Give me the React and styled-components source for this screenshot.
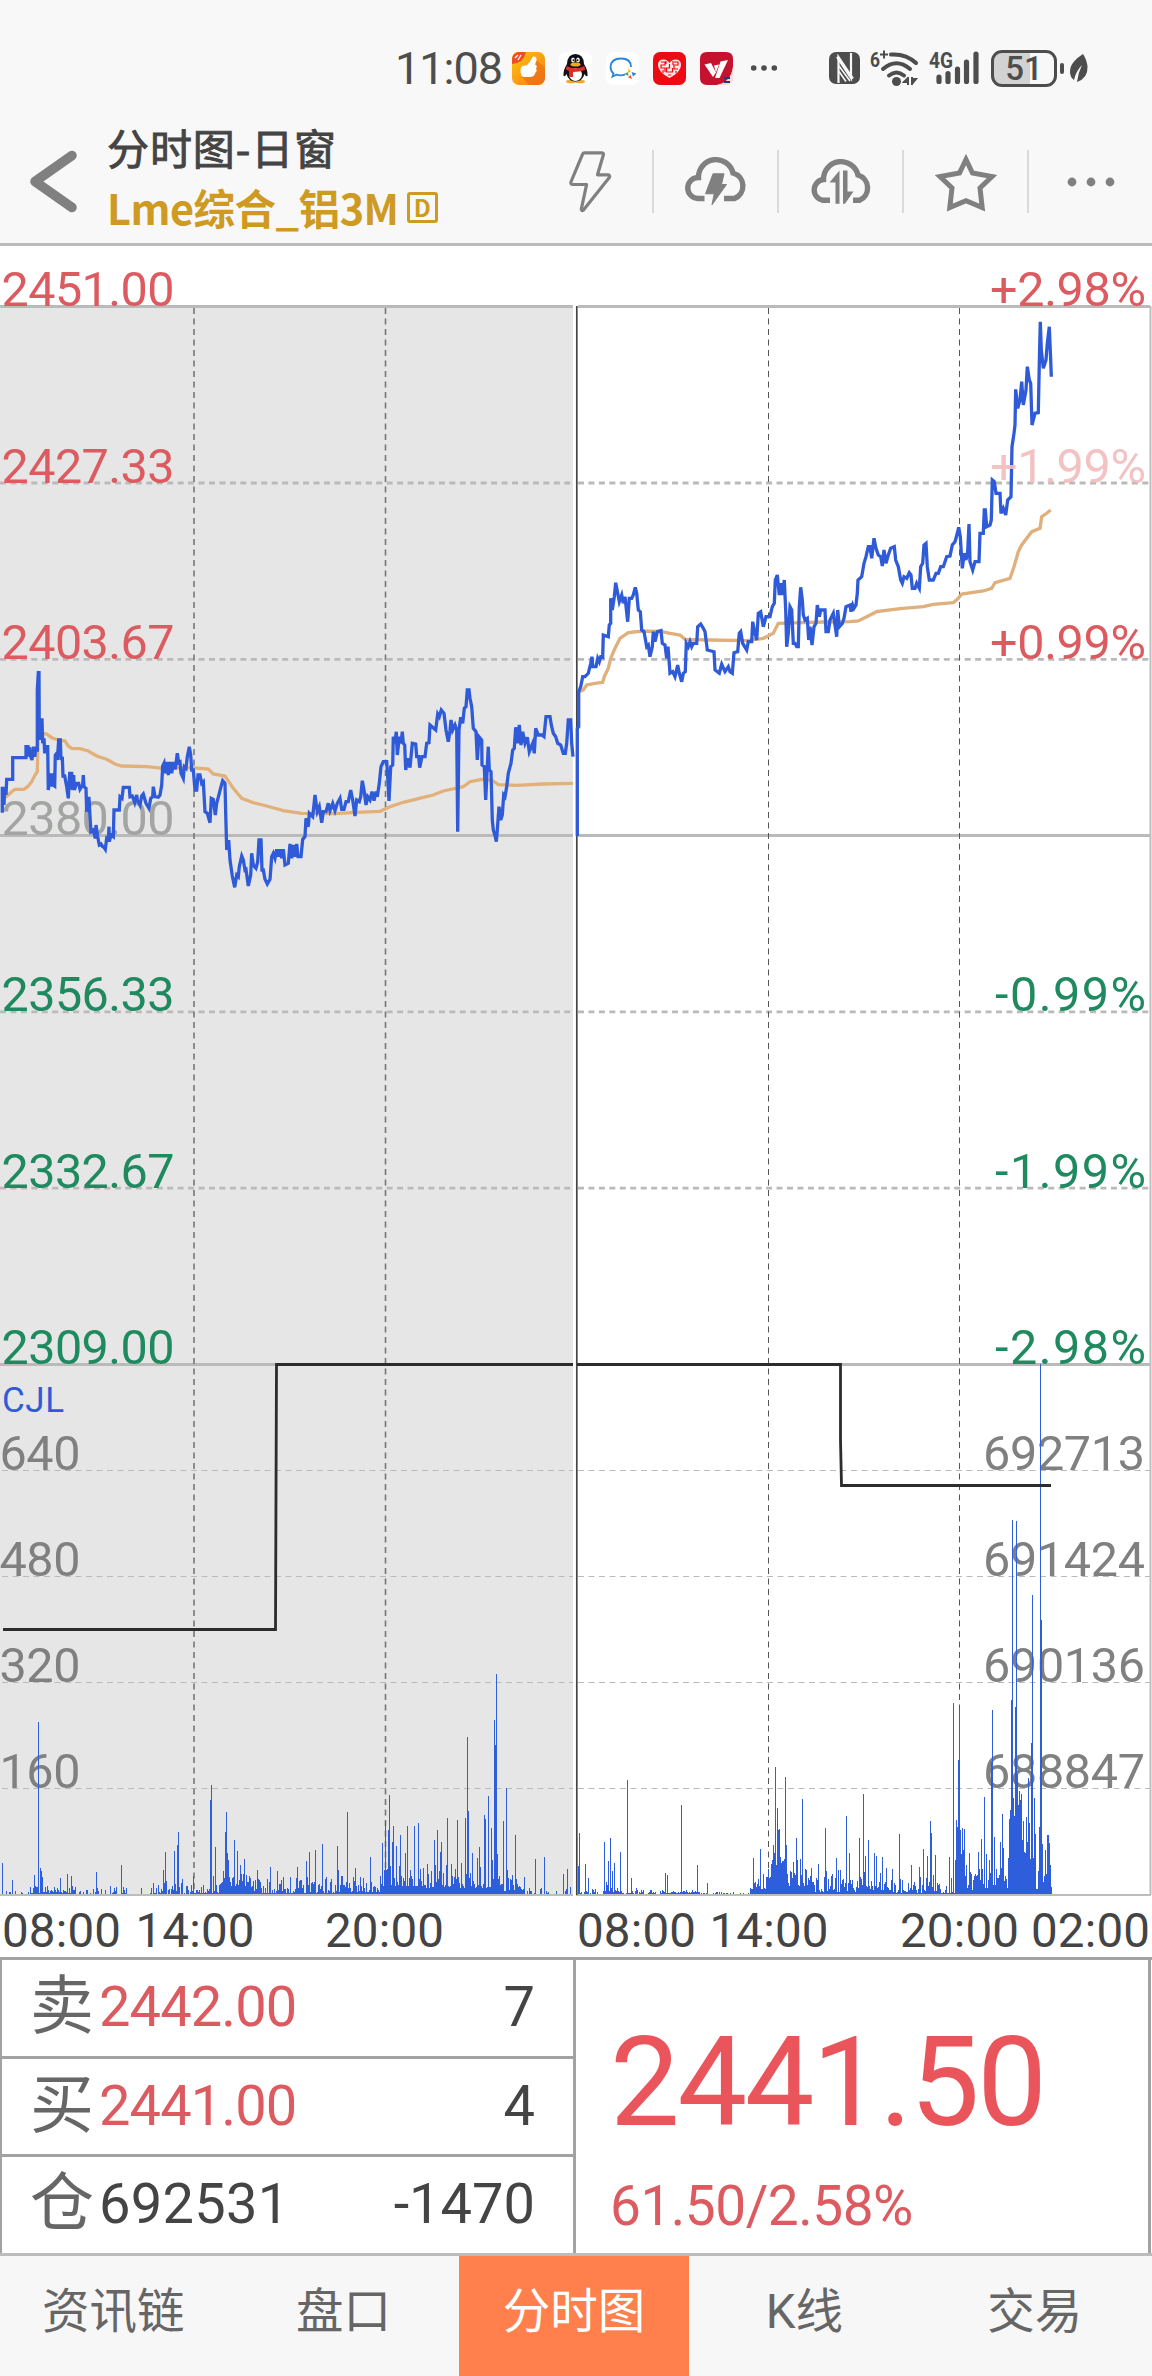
import styled, { createGlobalStyle } from "styled-components";

const GlobalStyle = createGlobalStyle`
  * {
    box-sizing: border-box;
  }

  body {
    margin: 0;
    background-color: #fff;
    font-family: Roboto, "Noto Sans CJK SC", sans-serif;
    color: #444;
  }
`;

// price traces: every segment has its own origin, points are in thirds of a pixel
const PRICE_PREV = [
  {
    x: 0,
    y: 640,
    raw: "7,518 7,445 12,445 12,495 14,440 18,465 20,418 38,418 38,353 78,353 78,320 84,320 86,350 88,322 92,350 96,360 100,320 104,350 108,320 112,335 112,150 115,98 117,98 118,300 121,240 126,240 128,310 132,295 134,340 138,320 143,320 145,450 150,400 153,440 157,400 160,435 164,438 166,345 170,340 172,360 176,300 181,300 183,360 187,350 189,408 194,408 200,440 205,475 209,400 215,400 217,450 221,405 223,450 230,430 236,430 240,448 248,435 250,405 252,440 258,445 260,515 265,475 267,475 271,545 273,575 280,570 286,595 288,555 293,590 298,615 303,612 308,620 312,622 316,628 320,595 325,598 327,560 328,605 333,585 340,590 342,510 358,510 360,470 366,475 370,442 388,442 390,470 397,468 404,488 410,465 412,480 420,495 425,468 430,462 438,490 447,505 452,475 458,470 460,440 465,470 475,472 480,465 485,435 488,378 492,370 495,400 500,366 505,405 510,366 515,400 520,366 526,388 532,340 536,368 540,366 543,400 550,415 553,380 558,385 562,350 568,320 572,345 575,390 580,390 585,450 590,450 594,405 600,405 605,430 610,425 615,515 622,520 630,548 634,475 640,478 646,525 650,490 658,460 663,440 668,422 675,430 677,520 680,630 686,600 690,660 697,708 704,742 710,705 715,710 718,680 725,648 730,660 735,690 738,688 745,738 752,705 755,640 760,675 768,685 773,665 777,600 783,600 786,690 790,690 795,718 802,732 810,718 815,650 820,640 825,655 830,628 835,650 840,628 845,655 850,628 855,675 865,670"
  },
  {
    x: 290,
    y: 640,
    raw: "0,612 5,655 10,615 16,650 20,612 24,650 33,650 38,598 45,590 48,535 55,560 58,520 68,530 75,465 82,515 88,500 95,548 100,515 108,515 115,490 120,512 128,490 135,512 142,490 150,475 155,508 162,508 168,485 175,485 182,450 188,480 195,528 200,480 208,485 212,470 217,422 222,450 228,495 233,470 240,480 246,455 252,482 258,455 262,470 268,430 273,380 280,365 290,365 293,410 297,483 302,380 308,375 310,290 314,310 319,275 322,345 328,290 333,310 337,275 340,310 344,315 347,390 353,355 360,383 367,310 377,312 380,350 386,350 389,383 396,350 405,350 410,310 417,308 420,255 437,270 443,222 448,230 454,210 462,220 468,270 475,305 480,272 483,240 488,270 495,255 500,270 503,575 507,270 512,232 518,250 523,205 528,200 532,150 537,150 540,175 545,200 550,265 558,275 562,360 567,290 575,300 576,375 583,380 587,480 592,380 595,320 598,390 603,395 607,540 610,570 616,590 619,605 622,570 627,500 632,540 637,525 641,465 645,470 650,440 655,400 663,370 668,330 673,325 677,262 683,310 688,255 693,315 698,275 705,310 712,292 718,335 728,310 733,340 737,265 745,285 755,285 762,290 768,230 780,230 784,255 790,280 797,290 803,310 812,315 820,340 826,340 830,310 835,240 842,240 845,310 849,350"
  }
];

const PRICE_TODAY = [
  {
    x: 570,
    y: 500,
    raw: "22,1008 22,685 26,680 26,575 32,560 38,530 45,530 55,520 62,490 66,470 68,500 78,500 83,475 88,485 92,470 98,472 100,405 115,410 118,375 122,370 122,295 127,330 133,290 137,248 143,280 148,305 155,285 160,310 165,290 173,365 178,295 185,295 190,285 196,262 200,280 205,330 211,335 215,390 222,395 230,440 235,435 240,470 247,440 250,395 255,425 262,395 273,392 277,430 285,435 290,475 294,440 300,520 308,515 315,530 323,495 328,520 335,545 340,520 346,515 349,430 355,440 360,425 365,440 370,430 380,430 383,380 392,372 400,385 405,395 412,450 432,455 435,510 448,520 455,493 465,515 475,500 480,515 487,520 492,458 503,455 508,400 512,395 518,430 530,450 535,425 545,425 548,365 553,390 560,420 565,340 572,335 580,380 588,350 600,350 607,320 613,310 616,240 622,225 628,285 633,250 637,285 643,240 647,330 650,440 655,400 660,320 665,330 670,430 675,430 680,440 685,440 688,320 692,262 697,300 700,345 705,360 712,355 716,420 720,380 726,435 732,380 738,370 742,315 748,350 752,330 765,330 768,395 775,395 780,360 790,340 795,375 800,410 803,330 808,380 817,370 822,355 828,320"
  },
  {
    x: 850,
    y: 300,
    raw: "0,915 3,935 8,915 12,925 18,915 22,880 24,840 30,835 35,830 42,790 48,770 55,740 60,740 65,775 72,715 78,745 85,765 92,770 97,798 102,750 108,790 115,765 122,745 133,740 137,780 145,800 152,840 157,850 162,830 170,835 178,818 183,825 187,865 195,865 200,850 208,865 212,800 218,790 222,735 228,730 232,800 238,840 250,840 258,820 265,820 272,800 280,800 290,770 300,768 307,735 315,725 322,700 326,682 331,710 337,805 343,760 348,780 353,755 357,672 360,785 368,810 375,785 387,785 390,700 400,700 403,630 406,630 410,680 420,675 424,660 427,540 433,545 438,580 450,580 453,640 460,625 467,645 473,600 483,590 486,440 492,400 495,375 497,268 503,325 510,300 515,245 520,315 528,270 532,200 538,240 542,250 546,375 555,340 565,338 568,190 571,65 574,150 580,205 588,180 592,130 598,80 602,180 604,230"
  }
];

const AVG_PREV = [
  {
    x: 0,
    y: 640,
    raw: "12,475 25,465 35,455 45,448 72,448 85,438 95,425 105,405 112,395 114,300 125,280 140,282 155,293 175,300 195,303 205,318 215,325 240,326 265,333 290,348 320,358 345,372 365,378 440,380 490,385 575,383 625,387 640,402 675,408 700,445 725,475 760,488 800,498 850,512"
  },
  {
    x: 290,
    y: 640,
    raw: "0,515 35,520 130,521 200,517 270,514 300,500 340,487 400,472 430,465 460,453 520,440 540,425 575,418 605,420 625,434 680,436 760,432 849,430"
  }
];

const AVG_TODAY = [
  {
    x: 570,
    y: 500,
    raw: "28,575 40,570 50,555 75,550 98,547 103,530 115,505 122,475 135,445 150,415 175,398 220,393 275,395 300,400 330,405 345,418 420,420 530,422 580,415 610,400 625,370 700,368 760,366 840,365"
  },
  {
    x: 850,
    y: 300,
    raw: "0,965 25,963 50,950 80,935 150,926 220,920 250,913 310,908 325,895 335,882 400,873 425,865 435,848 480,835 492,800 505,755 515,735 545,695 570,685 575,650 590,640 602,630"
  }
];

// x, height
const VOLUME_PEAKS = [
  [2, 31], [12, 14], [34, 19], [38, 172], [40, 26], [41, 23], [42, 17], [60, 16], [67, 20], [71, 18], [96, 22], [121, 29],
  [141, 6], [153, 11], [163, 24], [165, 42], [174, 43], [177, 49], [178, 62], [182, 15], [193, 18], [210, 94], [211, 109],
  [213, 18], [215, 47], [225, 62], [226, 82], [227, 41], [228, 34], [234, 54], [237, 43], [240, 29], [244, 35], [246, 19],
  [257, 24], [270, 27], [277, 23], [283, 17], [290, 17], [297, 27], [306, 33], [309, 42], [315, 44], [322, 50], [337, 48],
  [338, 24], [347, 82], [355, 26], [370, 37], [382, 51], [385, 73], [388, 64], [389, 99], [392, 52], [393, 68], [396, 48],
  [400, 59], [405, 41], [407, 68], [414, 68], [418, 71], [420, 25], [434, 54], [437, 64], [440, 42], [441, 52], [447, 76],
  [451, 30], [457, 74], [461, 31], [465, 76], [467, 157], [468, 83], [472, 41], [477, 36], [479, 47], [484, 79], [485, 75],
  [488, 98], [491, 66], [492, 34], [494, 174], [495, 149], [496, 220], [497, 40], [503, 73], [506, 106], [507, 24],
  [512, 19], [515, 59], [535, 35], [544, 37], [563, 20], [567, 25],
  [578, 28], [579, 61], [585, 30], [588, 16], [604, 52], [608, 33], [610, 56], [612, 23], [614, 31], [620, 42], [627, 114],
  [631, 16], [665, 21], [667, 19], [681, 89], [697, 29], [707, 11], [753, 36], [760, 45], [763, 20], [768, 25], [773, 49],
  [774, 41], [775, 127], [777, 86], [778, 64], [779, 65], [785, 117], [786, 49], [793, 32], [796, 56], [797, 34], [800, 35],
  [802, 95], [806, 24], [811, 26], [818, 30], [825, 66], [832, 20], [836, 36], [846, 78], [849, 41], [859, 56], [863, 100],
  [865, 38], [868, 54], [874, 41], [876, 38], [882, 37], [886, 26], [892, 25], [899, 60], [911, 29], [919, 27], [923, 45],
  [927, 38], [930, 73], [931, 61], [935, 39], [949, 37], [953, 191], [956, 74], [957, 67], [958, 134], [959, 184],
  [960, 64], [962, 66], [964, 65], [969, 41], [978, 42], [981, 55], [984, 97], [986, 40], [991, 132], [992, 184],
  [994, 57], [1000, 52], [1002, 80], [1003, 46], [1009, 75], [1011, 194], [1012, 374], [1013, 96], [1014, 78], [1015, 187],
  [1016, 373], [1017, 120], [1018, 89], [1019, 103], [1020, 94], [1021, 100], [1022, 54], [1026, 77], [1028, 116],
  [1029, 71], [1031, 151], [1032, 299], [1034, 96], [1035, 60], [1039, 67], [1040, 530], [1041, 274], [1042, 50],
  [1045, 44], [1047, 59], [1048, 59], [1049, 51], [1050, 29], [1051, 7]
];

// from, to, floor, spread
const VOLUME_BASE = [
  [3, 30, -3, 6], [30, 50, 1, 9], [50, 75, 1, 9], [75, 128, -2, 10], [128, 150, -5, 6], [150, 195, 0, 13],
  [195, 219, 1, 8], [219, 250, 8, 16], [250, 305, 1, 15], [305, 345, 1, 18], [345, 380, 2, 15], [380, 425, 8, 22],
  [425, 500, 6, 24], [500, 525, 3, 14], [525, 572, -3, 11], [578, 605, -1, 7], [605, 622, 2, 12], [622, 665, 0, 6],
  [665, 700, 1, 4], [700, 750, -1, 3], [750, 768, 5, 14], [768, 785, 14, 26], [785, 815, 8, 22], [815, 870, 2, 24],
  [870, 890, 3, 18], [890, 918, 1, 14], [918, 955, 1, 20], [955, 965, 30, 30], [965, 985, 3, 26], [985, 1010, 6, 30],
  [1010, 1026, 40, 45], [1026, 1036, 35, 30], [1036, 1038, 5, 15], [1038, 1051, 12, 26]
];

const PRICE_ROWS = [
  { y: 306.5, price: "2451.00", change: "+2.98%", color: "#dc5b60", solid: true },
  { y: 483, price: "2427.33", change: "+1.99%", color: "#dc5b60" },
  { y: 659.3, price: "2403.67", change: "+0.99%", color: "#dc5b60" },
  { y: 835.5, price: "2380.00", color: "#a3a5a3", solid: true },
  { y: 1011.8, price: "2356.33", change: "-0.99%", color: "#1f8a5f" },
  { y: 1188.2, price: "2332.67", change: "-1.99%", color: "#1f8a5f" },
  { y: 1364.5, price: "2309.00", change: "-2.98%", color: "#1f8a5f", solid: true }
];

const VOLUME_ROWS = [
  { y: 1470.5, volume: "640", interest: "692713" },
  { y: 1576.5, volume: "480", interest: "691424" },
  { y: 1682.5, volume: "320", interest: "690136" },
  { y: 1788.5, volume: "160", interest: "688847" }
];

const TIMES = [
  [2, "08:00"],
  [135.5, "14:00"],
  [325, "20:00"],
  [577, "08:00"],
  [709.5, "14:00"],
  [900, "20:00"],
  [1031, "02:00"]
];

const QUOTES = [
  { label: "卖", value: "2442.00", amount: "7", up: true },
  { label: "买", value: "2441.00", amount: "4", up: true },
  { label: "仓", value: "692531", amount: "-1470" }
];

const TABS = ["资讯链", "盘口", "分时图", "K线", "交易"];

const toPoints = (segments) =>
  segments
    .map(({ x, y, raw }) =>
      raw
        .split(" ")
        .map((pair) => {
          const [px, py] = pair.split(",").map(Number);
          return `${(x + px / 3).toFixed(1)},${(y + py / 3).toFixed(1)}`;
        })
        .join(" ")
    )
    .join(" ");

const volumePath = () => {
  const heights = {};
  let seed = 7;
  VOLUME_BASE.forEach(([from, to, floor, spread]) => {
    for (let x = from; x < to; x++) {
      seed = (seed * 1103515245 + 12345) % 2147483648;
      const r = seed / 2147483648;
      heights[x] = Math.round(floor + spread * r * r);
    }
  });
  VOLUME_PEAKS.forEach(([x, h]) => {
    heights[x] = h;
  });
  return Object.entries(heights)
    .filter(([, h]) => h > 0)
    .map(([x, h]) => `M${x} 1894v${-h}h1v${h}z`)
    .join("");
};

const NfcIcon = () => (
  <svg width="31" height="32" viewBox="0 0 31 32">
    <rect width="31" height="32" rx="7" fill="#4d4d4d" />
    <path d="M9.500 31V5L24 26.500" fill="none" stroke="#f8f8f8" strokeWidth="2.200" />
    <path d="M22 1v25L8 5" fill="none" stroke="#f8f8f8" strokeWidth="2.200" />
    <path d="M10 14l11 15M10 19.500l7 10" stroke="#f8f8f8" strokeWidth="1.600" />
  </svg>
);

const WifiIcon = () => (
  <svg width="49" height="37" viewBox="0 0 49 37">
    <text x="0" y="17" fontSize="21" fontWeight="700" fill="#4d4d4d" textLength="10" lengthAdjust="spacingAndGlyphs">6</text>
    <path d="M10 4.500h8M14 .5v8" stroke="#4d4d4d" strokeWidth="2" />
    <g fill="none" stroke="#4d4d4d" strokeWidth="4" strokeLinecap="round">
      <path d="M21 4.500q15-1 25 8.500" />
      <path d="M13 19q13.500-11.500 27 0" />
      <path d="M19 25.500q7.500-6 15 0" />
    </g>
    <circle cx="26.500" cy="31.500" r="4.500" fill="#4d4d4d" />
    <path d="M38 27v8M38 28l-4 4h4M42 27v8M42 34l4-5h-4" stroke="#4d4d4d" strokeWidth="2" fill="#4d4d4d" />
  </svg>
);

const SignalIcon = () => (
  <svg width="50" height="36" viewBox="0 0 50 36">
    <text x="0" y="17.500" fontSize="22" fontWeight="700" fill="#4d4d4d" textLength="24" lengthAdjust="spacingAndGlyphs">4G</text>
    <g stroke="#4d4d4d" strokeWidth="5.200" strokeLinecap="round">
      <path d="M10 27v4.500M19 23.500v8M28.500 19v12.500M37.500 12v19.500M47 4v27.500" />
    </g>
  </svg>
);

const LeafIcon = () => (
  <svg width="18" height="28" viewBox="0 0 18 28">
    <path d="M13 0C4 6 0 11 0 18q0 5 4 8Q6 17 12 11 8 19 7 28 18 24 17.500 13 17 6 13 0z" fill="#4d4d4d" />
  </svg>
);

const ThumbApp = () => (
  <svg width="33" height="33" viewBox="0 0 33 33">
    <defs>
      <linearGradient id="thumb" x1="0" y1="0" x2="1" y2="1">
        <stop offset="0" stopColor="#ffc60a" />
        <stop offset="1" stopColor="#f47a20" />
      </linearGradient>
      <clipPath id="thumbClip">
        <rect width="33" height="33" rx="7" />
      </clipPath>
    </defs>
    <g clipPath="url(#thumbClip)">
      <rect width="33" height="33" fill="url(#thumb)" />
      <path d="M24 7l9 9v17H17l-7-8z" fill="#ea6a12" opacity=".6" />
      <path d="M0 0h14q-2 11-14 12z" fill="#ef4e24" />
      <path d="M3 6l3-3M6 8l3-5" stroke="#fff" strokeWidth="1.200" />
      <path d="M21 4.500q4-.5 3.500 4L23 12.500q3 1.500 1 4 1.500 2.500-.5 4-1 4-5 4.500h-7q-3-1-3-6 0-4 2-5l4.500-1q3-2.500 6-8.500z" fill="#fff" />
    </g>
  </svg>
);

const PenguinApp = () => (
  <svg width="33" height="33" viewBox="0 0 33 33">
    <rect width="33" height="33" rx="7" fill="#fff" />
    <ellipse cx="12" cy="29.500" rx="5" ry="1.800" fill="#f5a623" />
    <ellipse cx="21" cy="29.500" rx="5" ry="1.800" fill="#f5a623" />
    <path d="M16.500 2q8 0 8.500 10 4 6 3.500 12-1.500 1-3-2-2 7.500-9 7.500T7.500 22q-1.500 3-3 2-.5-6 3.500-12 .5-10 8.500-10z" fill="#111" />
    <ellipse cx="16.500" cy="22.500" rx="6.500" ry="6.500" fill="#fff" />
    <path d="M7.500 14q9 4.500 18 0l.5 4q-5 2-12 2v5h-4v-6l-3-1.500z" fill="#e22b2b" />
    <ellipse cx="16.500" cy="12.500" rx="5" ry="2" fill="#f5a623" />
    <ellipse cx="14" cy="8" rx="1.800" ry="2.500" fill="#fff" />
    <ellipse cx="19" cy="8" rx="1.800" ry="2.500" fill="#fff" />
    <circle cx="14.500" cy="8.300" r="1" fill="#111" />
    <circle cx="18.500" cy="8.300" r="1" fill="#111" />
  </svg>
);

const ChatApp = () => (
  <svg width="33" height="33" viewBox="0 0 33 33">
    <rect width="33" height="33" rx="7" fill="#fff" />
    <path d="M25 15q0-8.500-10-8.500T4.500 15q0 4 3 6.500l-1 3 4-1.800q4 1.300 8.500 0" fill="none" stroke="#2a86d8" strokeWidth="1.800" />
    <path d="M22.500 16.500l2.500 3.500-3 .5z" fill="#f7b500" />
    <path d="M25.500 20l5 1.500-3.500 3z" fill="#2a86d8" />
    <path d="M24.500 23l1.500 4-4-1.500z" fill="#f0532d" />
    <path d="M18 22l4-2 .5 4z" fill="#4bb04f" />
  </svg>
);

const HeartApp = () => (
  <svg width="33" height="33" viewBox="0 0 33 33">
    <rect width="33" height="33" rx="7" fill="#ee0a12" />
    <path d="M16.500 26Q5 20 5 13q0-5.500 5.500-5.500 4 0 6 3.500 2-3.500 6-3.500Q28 7.500 28 13q0 7-11.500 13z" fill="#fff" opacity=".9" />
    <path d="M8 10h4v3H8v3h4v4M16.500 12v4h-3v4h6v-4M21 10h4v3h-4v4h4M15 23h3M10 18v3M23 19v2M13 9v3M20 9v4" fill="none" stroke="#ee0a12" strokeWidth="1.200" />
  </svg>
);

const CheckApp = () => (
  <svg width="33" height="33" viewBox="0 0 33 33">
    <path d="M7 0h19q7 0 7 7v8Q31 31 17 33H7q-7 0-7-7V7q0-7 7-7z" fill="#c4122f" />
    <path d="M33 15v11q0 7-7 7h-9Q31 30 33 15z" fill="#f6dcdc" />
    <path d="M4.500 12.500L11 11l5 9.500-3 4.500z" fill="#fff" />
    <path d="M20.500 9.500L28 8 19.500 26h-4.500z" fill="#fff" />
    <path d="M14 13.500l5-1-3 8z" fill="#fff" />
    <path d="M24 26h6M24 30h6" stroke="#263a78" strokeWidth="1.800" />
  </svg>
);

const BoltIcon = () => (
  <svg width="64" height="64" viewBox="0 0 64 64">
    <path d="M26.500 2.800H44q1.800.3 1.400 2L39.500 24.800h10.800q2.200 1 1 2.700L25.500 60q-2 1.500-2.200-.8l5.300-24.700H14.500q-2-.5-1.600-2.500L24.500 4.300q.6-1.500 2-1.500z" fill="none" stroke="#808080" strokeWidth="3.200" strokeLinejoin="round" />
  </svg>
);

const CloudBoltIcon = () => (
  <svg width="64" height="64" viewBox="0 0 64 64">
    <path d="M20.500 48.500H14A10.500 10.500 0 0 1 14.500 27.500A17.500 17.500 0 0 1 49 23A13.500 13.500 0 0 1 50.500 48.500H40" fill="none" stroke="#808080" strokeWidth="5.400" />
    <path d="M29 23.800h11l-2.500 10.700h5L28 54.800l2.200-11H21.500z" fill="#808080" stroke="#808080" strokeLinejoin="round" />
  </svg>
);

const CloudSyncIcon = () => (
  <svg width="64" height="64" viewBox="0 0 64 64">
    <path d="M21 50.300H14A10.500 10.500 0 0 1 14.500 29.500A17.500 17.500 0 0 1 49 25A13.500 13.500 0 0 1 50.500 50.300H44" fill="none" stroke="#808080" strokeWidth="5.400" />
    <path d="M30.500 20.500v33.300h-4V32.500h-6zM34 20.500v33.300h2L44.500 41.500H38.500v-21z" fill="#808080" />
  </svg>
);

const StarIcon = () => (
  <svg width="64" height="64" viewBox="0 0 64 64">
    <path d="M32 9.500l6.500 13.500 19.500 3.500-12 11.500 2.200 19.500-16.200-6.700-16.200 6.700L18 38 6 26.500 25.500 23z" fill="none" stroke="#808080" strokeWidth="5" />
  </svg>
);

const MoreIcon = () => (
  <svg width="64" height="64" viewBox="0 0 64 64" fill="#808080">
    <circle cx="13" cy="32" r="4.400" />
    <circle cx="32" cy="32" r="4.400" />
    <circle cx="51" cy="32" r="4.400" />
  </svg>
);

const TOOLS = [BoltIcon, CloudBoltIcon, CloudSyncIcon, StarIcon, MoreIcon];

const TimeChart = () => (
  <Chart viewBox="0 246 1152 1711">
    <rect x="0" y="306" width="573" height="1589" fill="#e6e6e6" />

    {PRICE_ROWS.map(({ y, solid }) => (
      <path key={y} d={`M0 ${y}H573M578 ${y}H1150`} stroke="#bababa" strokeWidth="2.800" strokeDasharray={solid ? "none" : "6 4.450"} />
    ))}
    {VOLUME_ROWS.map(({ y }) => (
      <path key={y} d={`M2 ${y}H573M578 ${y}H1150`} stroke="#bababa" strokeWidth="1.100" strokeDasharray="6 4.500" />
    ))}
    <path d="M0 1895H573M576 1895H1151M1150.500 306V1895" stroke="#bdbdbd" strokeWidth="2" />
    <path d="M194 308V1894M385.500 308V1894" stroke="#777" strokeWidth="1.600" strokeDasharray="6 4.500" />
    <path d="M768.500 308V1894M959.500 308V1894" stroke="#555" strokeWidth="1" strokeDasharray="6 4.500" />
    <path d="M576.800 306V1895" stroke="#444" strokeWidth="1.700" />

    {PRICE_ROWS.map(({ y, price, change, color }) => (
      <g key={y} fill={color}>
        <Label x="1.500" y={y - 0.5} textLength="173">{price}</Label>
        {change && change !== "+1.99%" && (
          <Label x={change[0] === "+" ? 990 : 995} y={y - 0.5} textLength={change[0] === "+" ? 156 : 151}>{change}</Label>
        )}
      </g>
    ))}
    {VOLUME_ROWS.map(({ y, volume, interest }) => (
      <g key={y} fill="#808080">
        <Label x="-0.500" y={y - 0.5} textLength="81">{volume}</Label>
        <Label x="983" y={y - 0.5} textLength="162">{interest}</Label>
      </g>
    ))}
    <Label x="2" y="1412" textLength="62" $size={35} fill="#2f5bd8">CJL</Label>

    <path d={volumePath()} fill="#2f5edc" shapeRendering="crispEdges" />
    <path d="M3 1629.500H275.500L276.500 1364.500H573M577 1364.500H840.500V1440L841.500 1485.500H1051" fill="none" stroke="#2c2c2c" strokeWidth="2.800" />

    <Trace points={toPoints(AVG_PREV)} stroke="#e2b079" />
    <Trace points={toPoints(AVG_TODAY)} stroke="#dfb07c" />
    <Trace points={toPoints(PRICE_PREV)} stroke="#2f5bd8" />
    <Trace points={toPoints(PRICE_TODAY)} stroke="#2f5bd8" />
    <Label x="990" y="482.500" textLength="156" fill="#f2bcbc" opacity=".9">+1.99%</Label>

    {TIMES.map(([x, time]) => (
      <Label key={x} x={x} y="1947" textLength="119" $size={47.5} fill="#444">{time}</Label>
    ))}
  </Chart>
);

const App = () => {
  return (
    <Screen>
      <GlobalStyle />
      <StatusBar>
        <Clock>11:08</Clock>
        <Apps>
          <ThumbApp />
          <PenguinApp />
          <ChatApp />
          <HeartApp />
          <CheckApp />
          <svg width="28" height="8" viewBox="0 0 28 8" fill="#4d4d4d">
            <circle cx="6.700" cy="4" r="2.800" />
            <circle cx="17" cy="4" r="2.800" />
            <circle cx="27.300" cy="4" r="2.800" />
          </svg>
        </Apps>
        <System>
          <NfcIcon />
          <WifiIcon />
          <SignalIcon />
          <Battery>51</Battery>
          <BatteryTip />
          <LeafIcon />
        </System>
      </StatusBar>

      <Header>
        <svg width="50" height="64" viewBox="0 0 50 64">
          <path d="M45 5.500L8 31.500L45 57.500" fill="none" stroke="#808080" strokeWidth="9.500" strokeLinecap="round" strokeLinejoin="round" />
        </svg>
        <Titles>
          <Title>分时图-日窗</Title>
          <Contract>
            Lme综合_铝3M
            <DayBadge>D</DayBadge>
          </Contract>
        </Titles>
        <Tools>
          {TOOLS.map((Icon, i) => (
            <Tool key={i}>
              <Icon />
            </Tool>
          ))}
        </Tools>
      </Header>

      <TimeChart />

      <Quote>
        <QuoteList>
          {QUOTES.map(({ label, value, amount, up }) => (
            <QuoteRow key={label}>
              <QuoteLabel>{label}</QuoteLabel>
              <QuoteValue $up={up}>{value}</QuoteValue>
              <QuoteAmount>{amount}</QuoteAmount>
            </QuoteRow>
          ))}
        </QuoteList>
        <LastPrice>
          <Price>2441.50</Price>
          <Change>61.50/2.58%</Change>
        </LastPrice>
      </Quote>

      <TabBar>
        {TABS.map((tab) => (
          <Tab key={tab} $active={tab === "分时图"}>
            {tab}
          </Tab>
        ))}
      </TabBar>
    </Screen>
  );
};

const Screen = styled.div`
  display: flex;
  flex-direction: column;
  width: 1152px;
  height: 2376px;
  overflow: hidden;
`;

const StatusBar = styled.div`
  display: flex;
  align-items: center;
  height: 120px;
  padding: 16px 64px 0 395px;
  background-color: #f8f8f8;

  svg {
    display: block;
    overflow: visible;
  }
`;

const Clock = styled.span`
  width: 117px;
  font-size: 45px;
  letter-spacing: -1px;
  color: #4d4d4d;
`;

const Apps = styled.div`
  display: flex;
  align-items: center;
  gap: 14px;
`;

const System = styled.div`
  display: flex;
  align-items: center;
  margin-left: auto;

  svg + svg {
    margin-left: 10px;
  }
`;

const Battery = styled.div`
  width: 66px;
  height: 37px;
  margin-left: 12px;
  border: 3px solid #4d4d4d;
  border-radius: 11px;
  background: linear-gradient(to right, #d2d2d2 60%, #f8f8f8 60%);
  color: #4d4d4d;
  font-size: 33px;
  font-weight: 500;
  line-height: 32px;
  text-align: center;
`;

const BatteryTip = styled.div`
  width: 4px;
  height: 11px;
  margin: 0 6px 0 3px;
  border-radius: 2px;
  background-color: #4d4d4d;
`;

const Header = styled.div`
  display: flex;
  align-items: center;
  height: 126px;
  padding-left: 27px;
  border-bottom: 3px solid #bcbcbc;
  background-color: #f8f8f8;
`;

const Titles = styled.div`
  margin-left: 30px;
  padding-bottom: 9px;
  font-family: "Noto Sans CJK SC", sans-serif;
  line-height: 60px;
  white-space: nowrap;
`;

const Title = styled.div`
  font-size: 42px;
  letter-spacing: 0.9px;
  -webkit-text-stroke: 0.9px #444;
`;

const Contract = styled.div`
  display: flex;
  align-items: center;
  color: #cf9a22;
  font-size: 41.5px;
  font-weight: 700;
  letter-spacing: -0.5px;
`;

const DayBadge = styled.span`
  width: 31px;
  height: 31px;
  margin-left: 8px;
  border: 3px solid #cf9a22;
  border-radius: 3px;
  font-size: 24px;
  line-height: 23px;
  text-align: center;
`;

const Tools = styled.div`
  display: flex;
  flex: none;
  margin-left: auto;
`;

const Tool = styled.div`
  display: flex;
  align-items: center;
  justify-content: center;
  width: 125px;
  height: 63px;

  & + & {
    border-left: 2px solid #dadada;
  }
`;

const Chart = styled.svg`
  display: block;
  flex: none;
  width: 1152px;
  height: 1711px;
  overflow: visible;
`;

const Label = styled.text`
  font-family: Roboto, sans-serif;
  font-size: ${({ $size }) => $size || 48.5}px;
`;

const Trace = styled.polyline`
  fill: none;
  stroke-width: 3.3px;
`;

const Quote = styled.div`
  display: flex;
  height: 299px;
  border-top: 3px solid #a2a2a2;
  border-bottom: 3px solid #bcbcbc;
`;

const QuoteList = styled.div`
  display: flex;
  flex-direction: column;
  width: 576px;
  border: solid #a2a2a2;
  border-width: 0 3px 0 2px;
`;

const QuoteRow = styled.div`
  display: flex;
  align-items: center;
  flex: 1;
  padding: 0 38px 2px 28px;

  & + & {
    border-top: 3px solid #a2a2a2;
  }
`;

const QuoteLabel = styled.span`
  width: 69px;
  color: #666;
  font-size: 64px;
  line-height: 88px;
`;

const QuoteValue = styled.span`
  color: ${({ $up }) => ($up ? "#dc5b60" : "#444")};
  font-size: 56px;
  letter-spacing: ${({ $up }) => ($up ? "-0.9px" : "0.3px")};
`;

const QuoteAmount = styled.span`
  margin-left: auto;
  font-size: 56px;
`;

const LastPrice = styled.div`
  display: flex;
  flex: 1;
  flex-direction: column;
  margin-right: 1px;
  padding: 48px 0 0 34px;
  border-right: 3px solid #a2a2a2;
`;

const Price = styled.div`
  color: #e9555b;
  font-size: 124px;
  letter-spacing: -2.3px;
  line-height: 150px;
`;

const Change = styled.div`
  color: #dc5b60;
  font-size: 55px;
  letter-spacing: -0.5px;
  line-height: 97px;
`;

const TabBar = styled.div`
  display: flex;
  height: 120px;
  margin-left: -2px;
  background-color: #f7f7f7;
`;

const Tab = styled.div`
  flex: 0 0 230.4px;
  padding-top: 26px;
  background-color: ${({ $active }) => ($active ? "#ff7f4d" : "#f7f7f7")};
  color: ${({ $active }) => ($active ? "#fff" : "#666")};
  font-size: 47.5px;
  line-height: 60px;
  text-align: center;
`;

export default App;
